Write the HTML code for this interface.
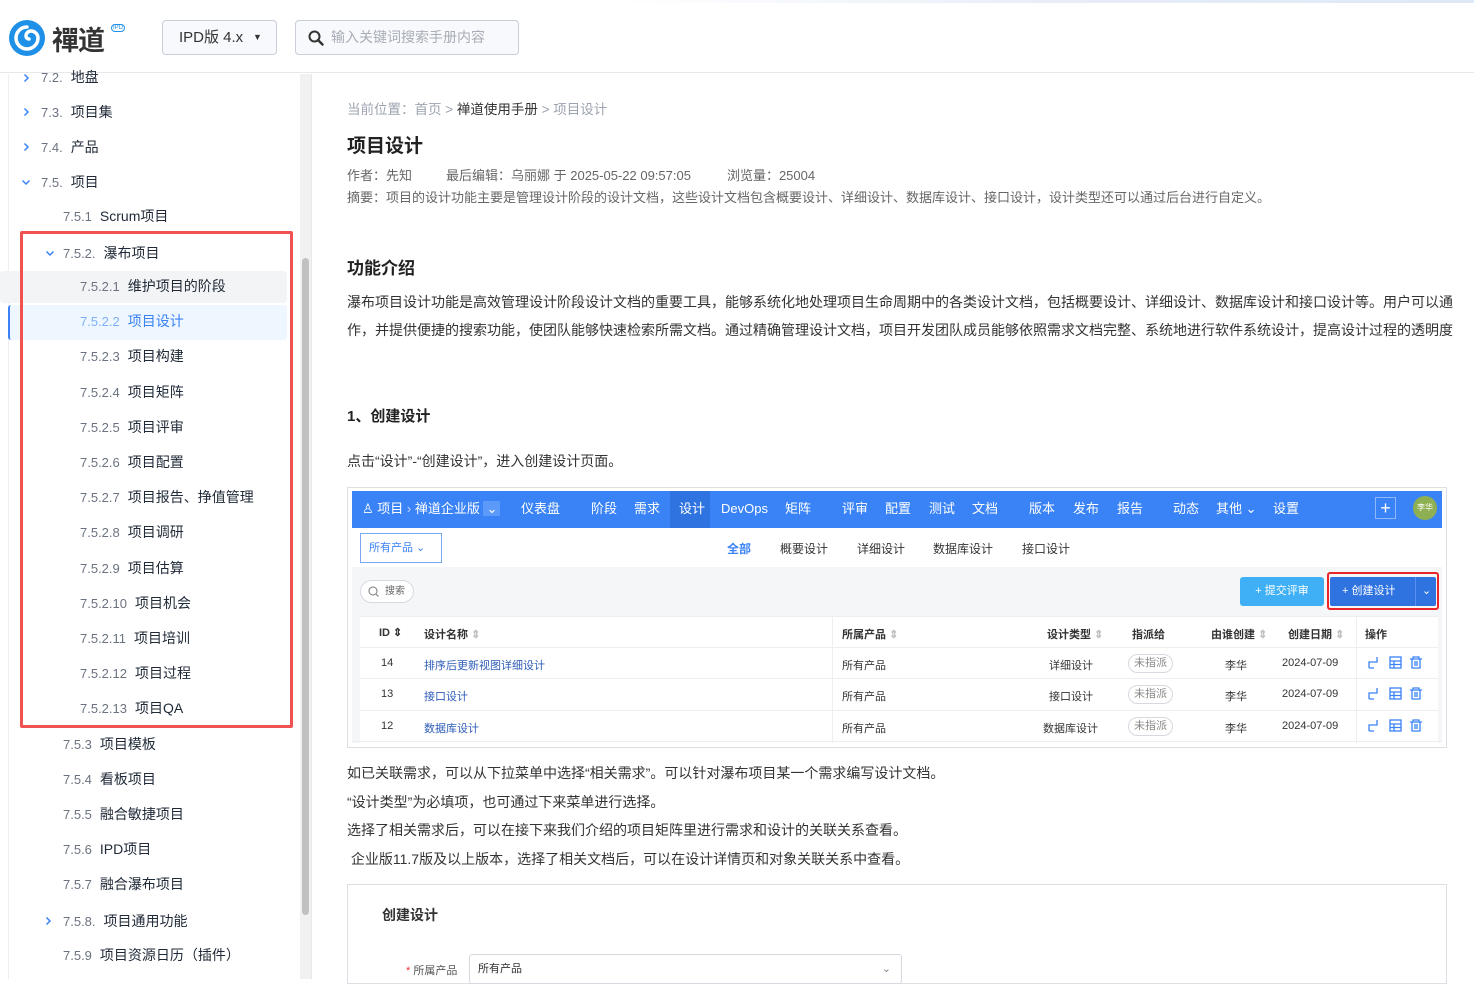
<!DOCTYPE html>
<html><head><meta charset="utf-8">
<style>
*{margin:0;padding:0;box-sizing:border-box}
body{width:1474px;height:979px;overflow:hidden;background:#fff;font-family:"Liberation Sans","Noto Sans CJK SC",sans-serif;color:#333;position:relative}
.a{position:absolute;white-space:nowrap}
.hdr{position:absolute;left:0;top:0;width:1474px;height:73px;border-bottom:1px solid #e6e8ec;background:#fff}
.side .it{position:absolute;font-size:14px;color:#1f2937;height:35px;line-height:35px}
.side .n{color:#6b7280;margin-right:8px;font-size:13px}
.chev{position:absolute;width:10px;height:10px}
.nav span{position:absolute;top:0;line-height:36px;color:#fff;font-size:13px}
.th{position:absolute;font-size:11px;font-weight:bold;color:#333;top:626px}
.td{position:absolute;font-size:11px;color:#333}
.lk{color:#2e5cb8}
.tag{position:absolute;border:1px solid #d6d9e0;border-radius:10px;font-size:11px;color:#888;padding:0 5px;line-height:17px}
</style></head><body>
<svg width="0" height="0" style="position:absolute"><defs>
<symbol id="cr" viewBox="0 0 10 10"><path d="M3.5 1.5L7 5 3.5 8.5" fill="none" stroke="#3b82f6" stroke-width="1.5"/></symbol>
<symbol id="cd" viewBox="0 0 10 10"><path d="M1.5 3.5L5 7 8.5 3.5" fill="none" stroke="#3b82f6" stroke-width="1.5"/></symbol>
</defs></svg>
<div class="hdr">
  <div style="position:absolute;left:620px;top:0;width:854px;height:3px;background:linear-gradient(90deg,#fff,#e8eef8,#dde7f5)"></div>
  <svg class="a" style="left:8px;top:19px" width="38" height="38" viewBox="0 0 38 38"><circle cx="19" cy="19" r="18" fill="#1e90e8"/><path d="M19 8a11 11 0 1 0 11 11 7 7 0 0 0-7-7 5 5 0 0 0-5 5 3 3 0 0 0 3 3" fill="none" stroke="#fff" stroke-width="3.5" stroke-linecap="round"/></svg>
  <div class="a" style="left:52px;top:19px;font-size:27px;font-weight:bold;color:#333;letter-spacing:-1px">禪道</div>
  <div class="a" style="left:111px;top:24px;font-size:6px;color:#1e90e8;border:1px solid #1e90e8;border-radius:4px;padding:0 1px">IPD</div>
  <div class="a" style="left:162px;top:20px;width:115px;height:35px;border:1px solid #c9ced8;border-radius:4px;background:#f8f9fc;font-size:15px;line-height:33px;padding-left:16px;color:#333">IPD版 4.x<span style="position:absolute;left:90px;top:0;font-size:9px">▼</span></div>
  <div class="a" style="left:295px;top:20px;width:224px;height:35px;border:1px solid #c9ced8;border-radius:4px;background:#f8f9fc;font-size:14px;line-height:33px;padding-left:35px;color:#a8adb6">输入关键词搜索手册内容
    <svg style="position:absolute;left:12px;top:9px" width="16" height="16" viewBox="0 0 16 16"><circle cx="6.5" cy="6.5" r="5" fill="none" stroke="#333" stroke-width="2"/><path d="M10 10l4.5 4.5" stroke="#333" stroke-width="2.4" stroke-linecap="round"/></svg></div>
</div>
<!-- sidebar -->
<div class="side">
  <div class="a" style="left:8px;top:74px;width:1px;height:905px;background:#eceef1"></div>
  <div class="a" style="left:311px;top:74px;width:1px;height:905px;background:#e6e8ec"></div>
  <div class="a" style="left:300px;top:74px;width:11px;height:905px;background:#f1f1f1"></div>
  <div class="a" style="left:302px;top:258px;width:7px;height:657px;background:#c1c1c1;border-radius:4px"></div>
  <div class="a" style="left:0;top:271px;width:287px;height:32px;background:#f3f4f6;border-radius:4px"></div>
  <div class="a" style="left:8px;top:305px;width:279px;height:35px;background:#eef6ff;border-radius:3px;border-left:2px solid #3b82f6"></div>
  <div class="a" style="left:20px;top:231px;width:273px;height:497px;border:3px solid #f05252;border-radius:2px"></div>

  <svg class="chev" style="left:21px;top:73px"><use href="#cr"/></svg><div class="it" style="left:41px;top:60px"><span class="n">7.2.</span>地盘</div>
  <svg class="chev" style="left:21px;top:107px"><use href="#cr"/></svg><div class="it" style="left:41px;top:95px"><span class="n">7.3.</span>项目集</div>
  <svg class="chev" style="left:21px;top:142px"><use href="#cr"/></svg><div class="it" style="left:41px;top:130px"><span class="n">7.4.</span>产品</div>
  <svg class="chev" style="left:21px;top:177px"><use href="#cd"/></svg><div class="it" style="left:41px;top:165px"><span class="n">7.5.</span>项目</div>
  <div class="it" style="left:63px;top:199px"><span class="n">7.5.1</span>Scrum项目</div>
  <svg class="chev" style="left:45px;top:248px"><use href="#cd"/></svg><div class="it" style="left:63px;top:236px"><span class="n">7.5.2.</span>瀑布项目</div>
  <div class="it" style="left:80px;top:269px"><span class="n">7.5.2.1</span>维护项目的阶段</div>
  <div class="it" style="left:80px;top:304px;color:#3b82f6"><span class="n" style="color:#7fb0f5">7.5.2.2</span>项目设计</div>
  <div class="it" style="left:80px;top:339px"><span class="n">7.5.2.3</span>项目构建</div>
  <div class="it" style="left:80px;top:375px"><span class="n">7.5.2.4</span>项目矩阵</div>
  <div class="it" style="left:80px;top:410px"><span class="n">7.5.2.5</span>项目评审</div>
  <div class="it" style="left:80px;top:445px"><span class="n">7.5.2.6</span>项目配置</div>
  <div class="it" style="left:80px;top:480px"><span class="n">7.5.2.7</span>项目报告、挣值管理</div>
  <div class="it" style="left:80px;top:515px"><span class="n">7.5.2.8</span>项目调研</div>
  <div class="it" style="left:80px;top:551px"><span class="n">7.5.2.9</span>项目估算</div>
  <div class="it" style="left:80px;top:586px"><span class="n">7.5.2.10</span>项目机会</div>
  <div class="it" style="left:80px;top:621px"><span class="n">7.5.2.11</span>项目培训</div>
  <div class="it" style="left:80px;top:656px"><span class="n">7.5.2.12</span>项目过程</div>
  <div class="it" style="left:80px;top:691px"><span class="n">7.5.2.13</span>项目QA</div>
  <div class="it" style="left:63px;top:727px"><span class="n">7.5.3</span>项目模板</div>
  <div class="it" style="left:63px;top:762px"><span class="n">7.5.4</span>看板项目</div>
  <div class="it" style="left:63px;top:797px"><span class="n">7.5.5</span>融合敏捷项目</div>
  <div class="it" style="left:63px;top:832px"><span class="n">7.5.6</span>IPD项目</div>
  <div class="it" style="left:63px;top:867px"><span class="n">7.5.7</span>融合瀑布项目</div>
  <svg class="chev" style="left:43px;top:916px"><use href="#cr"/></svg><div class="it" style="left:63px;top:904px"><span class="n">7.5.8.</span>项目通用功能</div>
  <div class="it" style="left:63px;top:938px"><span class="n">7.5.9</span>项目资源日历（插件）</div>
</div>
<!-- content -->
<div class="a" style="left:347px;top:98px;font-size:13.5px;color:#9ca3af">当前位置：首页 &gt; <span style="color:#333">禅道使用手册</span> &gt; 项目设计</div>
<div class="a" style="left:347px;top:131px;font-size:19px;font-weight:bold;color:#222">项目设计</div>
<div class="a" style="left:347px;top:165px;font-size:13px;color:#666">作者：先知<span style="margin-left:34px">最后编辑：乌丽娜 于 2025-05-22 09:57:05</span><span style="margin-left:36px">浏览量：25004</span></div>
<div class="a" style="left:347px;top:187px;font-size:13px;color:#666">摘要：项目的设计功能主要是管理设计阶段的设计文档，这些设计文档包含概要设计、详细设计、数据库设计、接口设计，设计类型还可以通过后台进行自定义。</div>
<div class="a" style="left:347px;top:254px;font-size:17px;font-weight:bold;color:#222">功能介绍</div>
<div class="a" style="left:347px;top:288px;font-size:14px;color:#333;line-height:28px">瀑布项目设计功能是高效管理设计阶段设计文档的重要工具，能够系统化地处理项目生命周期中的各类设计文档，包括概要设计、详细设计、数据库设计和接口设计等。用户可以通<br>作，并提供便捷的搜索功能，使团队能够快速检索所需文档。通过精确管理设计文档，项目开发团队成员能够依照需求文档完整、系统地进行软件系统设计，提高设计过程的透明度</div>
<div class="a" style="left:347px;top:405px;font-size:15px;font-weight:bold;color:#222">1、创建设计</div>
<div class="a" style="left:347px;top:451px;font-size:14px">点击“设计”-“创建设计”，进入创建设计页面。</div>
<!-- screenshot -->
<div class="a" style="left:347px;top:487px;width:1100px;height:261px;border:1px solid #dcdfe4;background:#fff"></div>
<div class="a" style="left:352px;top:491px;width:1090px;height:37px;background:#3a83f6"></div>
<div class="a" style="left:670px;top:491px;width:40px;height:37px;background:#2f73e0"></div>
<div class="nav" style="position:absolute;left:352px;top:491px;width:1090px;height:37px">
  <span style="left:10px">♙ 项目 <span style="position:static;opacity:.7">›</span> 禅道企业版 <span style="position:static;background:#5b9af8;padding:0 3px">⌄</span></span>
  <span style="left:169px">仪表盘</span><span style="left:239px">阶段</span><span style="left:282px">需求</span><span style="left:327px">设计</span><span style="left:369px">DevOps</span><span style="left:433px">矩阵</span>
  <span style="left:490px">评审</span><span style="left:533px">配置</span><span style="left:577px">测试</span><span style="left:620px">文档</span><span style="left:677px">版本</span><span style="left:721px">发布</span><span style="left:765px">报告</span><span style="left:821px">动态</span><span style="left:864px">其他 ⌄</span><span style="left:921px">设置</span>
  <span style="left:1023px;top:6px;width:21px;height:22px;border:1px solid #8fb8fb;line-height:20px;text-align:center;font-size:18px">+</span>
  <span style="left:1061px;top:5px;width:24px;height:24px;border-radius:12px;background:#8fb052;line-height:24px;text-align:center;font-size:8px">李华</span>
</div>
<div class="a" style="left:360px;top:533px;width:82px;height:30px;border:1px solid #7aa8f5;font-size:11px;color:#3a83f6;line-height:28px;padding-left:8px">所有产品 ⌄</div>
<div class="a" style="left:727px;top:540px;font-size:12px;color:#3a83f6;font-weight:bold">全部</div>
<div class="a" style="left:780px;top:540px;font-size:12px">概要设计</div>
<div class="a" style="left:857px;top:540px;font-size:12px">详细设计</div>
<div class="a" style="left:933px;top:540px;font-size:12px">数据库设计</div>
<div class="a" style="left:1022px;top:540px;font-size:12px">接口设计</div>
<div class="a" style="left:352px;top:567px;width:1090px;height:176px;background:#f5f6f8"></div>
<div class="a" style="left:360px;top:580px;width:54px;height:23px;border:1px solid #d6d9e0;border-radius:12px;font-size:10px;color:#666;line-height:21px;padding-left:24px;background:#fff">搜索<svg style="position:absolute;left:7px;top:5px" width="11" height="11"><circle cx="5" cy="5" r="4" fill="none" stroke="#777"/><path d="M8 8l2.5 2.5" stroke="#777"/></svg></div>
<div class="a" style="left:1240px;top:577px;width:84px;height:29px;background:#3fb0f5;border-radius:3px;color:#fff;font-size:11px;line-height:29px;text-align:center">+ 提交评审</div>
<div class="a" style="left:1327px;top:572px;width:112px;height:38px;border:2px solid #e8262a;border-radius:3px"></div>
<div class="a" style="left:1330px;top:577px;width:106px;height:29px;background:#2f73e0;border-radius:2px;color:#fff;font-size:11px;line-height:29px;padding-left:12px">+ 创建设计<span style="position:absolute;left:85px;top:0;border-left:1px solid #5b8ff0;padding-left:6px">⌄</span></div>
<div class="a" style="left:360px;top:616px;width:1078px;height:127px;background:#fff;border-top:1px solid #eceef1"></div>
<div class="a" style="left:360px;top:647px;width:1078px;height:1px;background:#eceef1"></div>
<div class="a" style="left:360px;top:678px;width:1078px;height:1px;background:#eceef1"></div>
<div class="a" style="left:360px;top:710px;width:1078px;height:1px;background:#eceef1"></div>
<div class="a" style="left:353px;top:741px;width:1088px;height:1px;background:#eceef1"></div>
<div class="a" style="left:832px;top:616px;width:1px;height:127px;background:#eceef1"></div>
<div class="a" style="left:1356px;top:616px;width:1px;height:127px;background:#eceef1"></div>
<div class="th" style="left:379px">ID ⇕</div><div class="th" style="left:424px">设计名称 <span style="color:#bbb">⇕</span></div><div class="th" style="left:842px">所属产品 <span style="color:#bbb">⇕</span></div>
<div class="th" style="left:1047px">设计类型 <span style="color:#bbb">⇕</span></div><div class="th" style="left:1132px">指派给</div><div class="th" style="left:1211px">由谁创建 <span style="color:#bbb">⇕</span></div><div class="th" style="left:1288px">创建日期 <span style="color:#bbb">⇕</span></div><div class="th" style="left:1365px">操作</div>
<div class="td" style="left:381px;top:657px">14</div><div class="td lk" style="left:424px;top:657px">排序后更新视图详细设计</div><div class="td" style="left:842px;top:657px">所有产品</div><div class="td" style="left:1049px;top:657px">详细设计</div><div class="tag" style="left:1128px;top:654px">未指派</div><div class="td" style="left:1225px;top:657px">李华</div><div class="td" style="left:1282px;top:657px">2024-07-09</div>
<div class="td" style="left:381px;top:688px">13</div><div class="td lk" style="left:424px;top:688px">接口设计</div><div class="td" style="left:842px;top:688px">所有产品</div><div class="td" style="left:1049px;top:688px">接口设计</div><div class="tag" style="left:1128px;top:685px">未指派</div><div class="td" style="left:1225px;top:688px">李华</div><div class="td" style="left:1282px;top:688px">2024-07-09</div>
<div class="td" style="left:381px;top:720px">12</div><div class="td lk" style="left:424px;top:720px">数据库设计</div><div class="td" style="left:842px;top:720px">所有产品</div><div class="td" style="left:1043px;top:720px">数据库设计</div><div class="tag" style="left:1128px;top:717px">未指派</div><div class="td" style="left:1225px;top:720px">李华</div><div class="td" style="left:1282px;top:720px">2024-07-09</div>
<svg class="a" style="left:1366px;top:655px" width="60" height="82" viewBox="0 0 60 82">
<g fill="none" stroke="#3a83f6" stroke-width="1.3">
<g id="r"><path d="M3 13V7h8V2M8 13H3"/><rect x="24" y="2" width="11" height="11"/><path d="M24 6h11M24 9.5h11M28 6v7"/><path d="M44 4h12M47 4V2h6v2M46 4v9h8V4M49 6v5M51 6v5"/></g>
<use href="#r" y="31"/><use href="#r" y="63"/></g></svg>
<!-- text -->
<div class="a" style="left:347px;top:759px;font-size:14px;line-height:28.5px">如已关联需求，可以从下拉菜单中选择“相关需求”。可以针对瀑布项目某一个需求编写设计文档。<br>“设计类型”为必填项，也可通过下来菜单进行选择。<br>选择了相关需求后，可以在接下来我们介绍的项目矩阵里进行需求和设计的关联关系查看。<br>&nbsp;企业版11.7版及以上版本，选择了相关文档后，可以在设计详情页和对象关联关系中查看。</div>
<div class="a" style="left:347px;top:884px;width:1100px;height:100px;border:1px solid #dcdfe4"></div>
<div class="a" style="left:382px;top:905px;font-size:14px;font-weight:bold;color:#333">创建设计</div>
<div class="a" style="left:406px;top:962px;font-size:11px;color:#555"><span style="color:#e33">*</span> 所属产品</div>
<div class="a" style="left:469px;top:954px;width:433px;height:30px;border:1px solid #d6d9e0;border-radius:3px;font-size:11px;line-height:28px;padding-left:8px">所有产品<span style="position:absolute;right:10px;color:#888">⌄</span></div>
</body></html>
